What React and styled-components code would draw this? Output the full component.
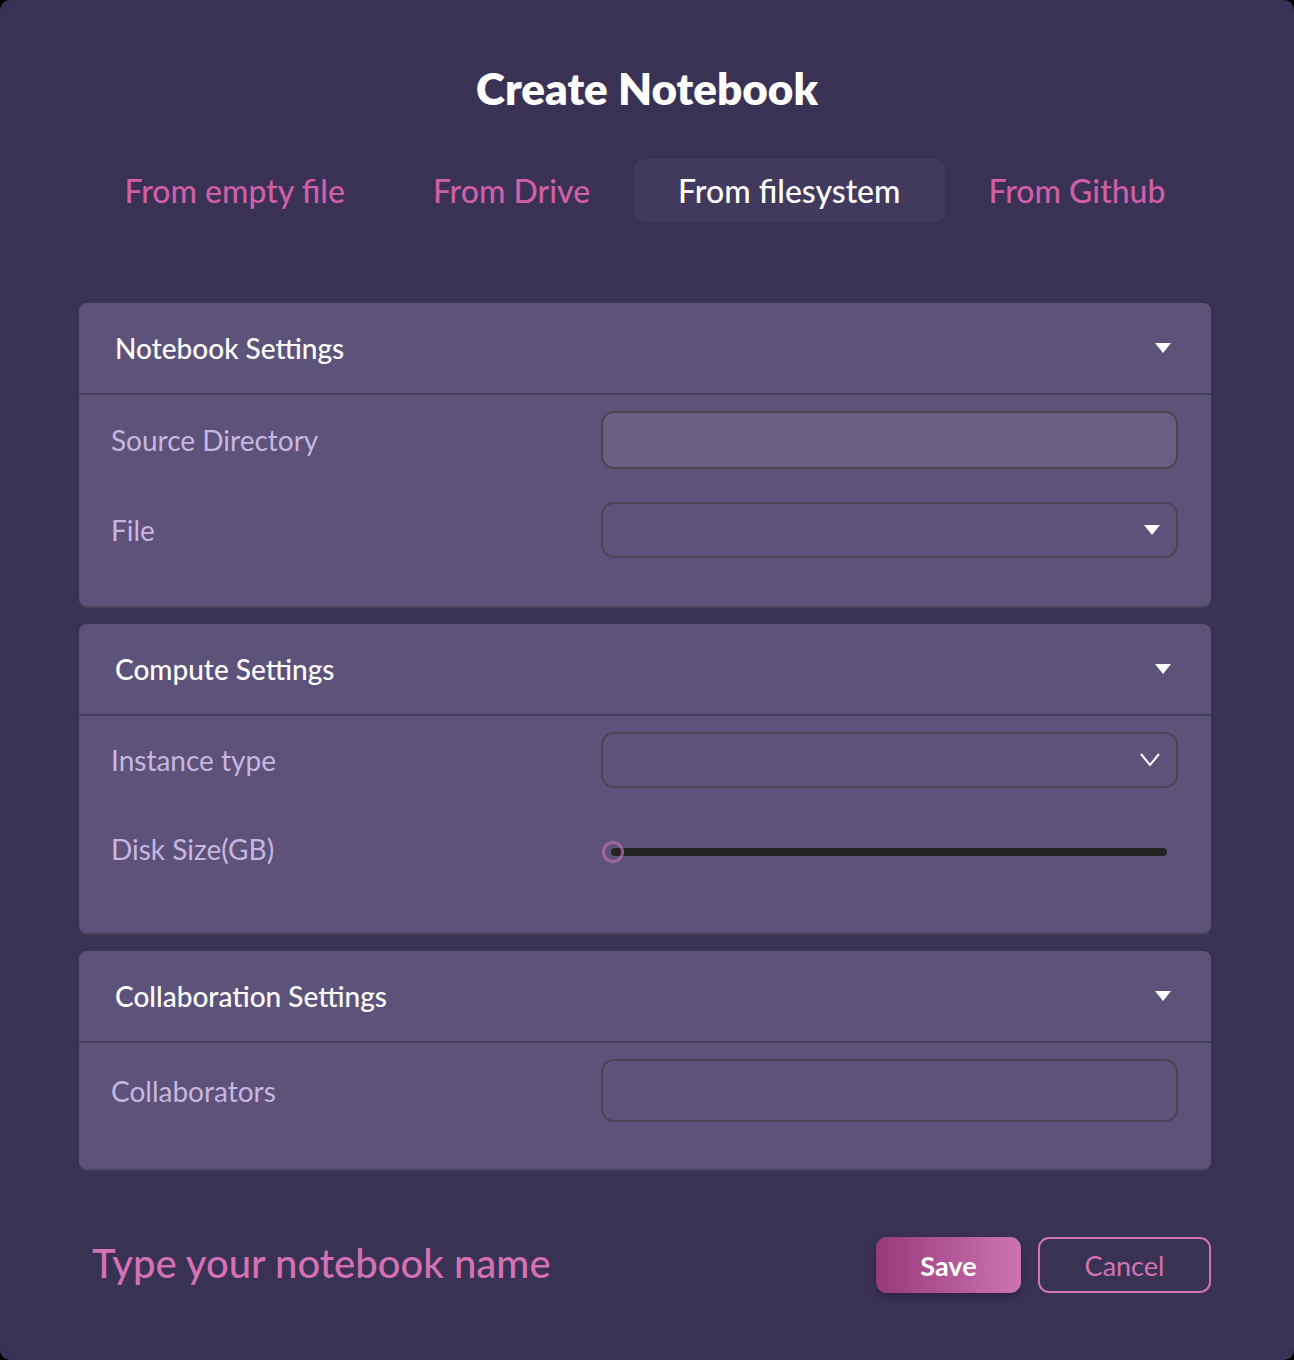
import styled, { createGlobalStyle } from "styled-components";

const GlobalStyle = createGlobalStyle`
  html, body {
    margin: 0;
    padding: 0;
    background: #000;
  }
  * {
    box-sizing: border-box;
  }
`;

const Page = styled.div`
  width: 1294px;
  height: 1360px;
  background-color: #3a3254;
  border-radius: 10px;
  font-family: Lato, "Noto Sans", sans-serif;
  padding: 62px 83px 0 79px;
  display: flex;
  flex-direction: column;
`;

const Title = styled.h1`
  margin: 0;
  text-align: center;
  color: #fff;
  font-size: 44px;
  font-weight: 800;
  line-height: 52px;
  padding-left: 4px;
`;

const Tabs = styled.div`
  display: flex;
  justify-content: center;
  margin-top: 45px;
  margin-bottom: 81px;
`;

const Tab = styled.button`
  border: none;
  background: ${(p) => (p.$active ? "#423a5c" : "transparent")};
  color: ${(p) => (p.$active ? "#ffffff" : "#cf5fa8")};
  font-family: inherit;
  font-size: 32px;
  font-weight: 500;
  height: 63px;
  padding: 0 44px;
  border-radius: 10px;
  cursor: pointer;
`;

const Panel = styled.section`
  background-color: #5d5279;
  border-radius: 8px;
  box-shadow: 0 2px 0 #48425a;
  margin-bottom: 18px;
  padding-bottom: ${(p) => p.$pb}px;
`;

const PanelHeader = styled.div`
  height: 92px;
  display: flex;
  align-items: center;
  justify-content: space-between;
  padding: 0 40px 0 36px;
  border-bottom: 2px solid #45405a;
  color: #fff;
  font-size: 28px;
  font-weight: 500;
`;

const PanelBody = styled.div`
  display: grid;
  grid-template-columns: 490px 1fr;
  row-gap: 33px;
  align-items: center;
  padding: 16px 33px 0 32px;
`;

const Label = styled.label`
  color: #c8b6e2;
  font-size: 28px;
  font-weight: 400;
`;

const Input = styled.div`
  height: ${(p) => p.$h || 58}px;
  border: 2px solid #4a4450;
  border-radius: 13px;
  background-color: ${(p) => (p.$light ? "#6a5f84" : "#5d5279")};
  display: flex;
  align-items: center;
  justify-content: flex-end;
  padding-right: 16px;
`;

const SliderWrap = styled.div`
  height: 55px;
  position: relative;
  display: flex;
  align-items: center;
  padding: 0 11px 0 10px;
`;

const Track = styled.div`
  flex: 1;
  height: 8px;
  border-radius: 4px;
  background-color: #232323;
  margin-top: 6px;
`;

const Thumb = styled.div`
  position: absolute;
  left: 1px;
  top: 50%;
  width: 22px;
  height: 22px;
  margin-top: -8px;
  border-radius: 50%;
  border: 3px solid rgba(186, 110, 170, 0.75);
`;

const Footer = styled.div`
  display: flex;
  align-items: center;
  margin-top: 50px;
  padding-left: 13px;
  gap: 17px;
`;

const NameInput = styled.input`
  flex: 1;
  background: transparent;
  border: none;
  outline: none;
  font-family: inherit;
  font-size: 40px;
  font-weight: 500;
  color: #d371b2;
  padding: 0;
  margin-top: -4px;
  &::placeholder {
    color: #d371b2;
  }
`;

const Button = styled.button`
  height: 56px;
  width: ${(p) => p.$w}px;
  border-radius: 11px;
  font-family: inherit;
  font-size: 27px;
  cursor: pointer;
  ${(p) =>
    p.$primary
      ? `
    border: none;
    background: linear-gradient(90deg, #98397a, #cc74b0);
    color: #fff;
    font-weight: 700;
    box-shadow: 0 3px 6px rgba(20, 10, 30, 0.35);
  `
      : `
    border: 2px solid #d074b2;
    background: transparent;
    color: #d074b2;
    font-weight: 400;
  `}
`;

const Caret = () => (
  <svg width="16" height="10" viewBox="0 0 16 10">
    <path d="M0 0 H16 L8 10 Z" fill="#fff" />
  </svg>
);

const Chevron = () => (
  <svg width="20" height="14" viewBox="0 0 20 14">
    <path d="M1 1 L10 12 L19 1" fill="none" stroke="#fff" strokeWidth="2" />
  </svg>
);

function Section({ title, pb, children }) {
  return (
    <Panel $pb={pb}>
      <PanelHeader>
        <span>{title}</span>
        <Caret />
      </PanelHeader>
      <PanelBody>{children}</PanelBody>
    </Panel>
  );
}

export default function App() {
  const tabs = ["From empty file", "From Drive", "From filesystem", "From Github"];
  return (
    <>
      <GlobalStyle />
      <Page>
        <Title>Create Notebook</Title>
        <Tabs>
          {tabs.map((t) => (
            <Tab key={t} $active={t === "From filesystem"}>
              {t}
            </Tab>
          ))}
        </Tabs>

        <Section title="Notebook Settings" pb={48}>
          <Label>Source Directory</Label>
          <Input $light />
          <Label>File</Label>
          <Input $h={56}>
            <Caret />
          </Input>
        </Section>

        <Section title="Compute Settings" pb={57}>
          <Label>Instance type</Label>
          <Input $h={56}>
            <Chevron />
          </Input>
          <Label>Disk Size(GB)</Label>
          <SliderWrap>
            <Track />
            <Thumb />
          </SliderWrap>
        </Section>

        <Section title="Collaboration Settings" pb={47}>
          <Label>Collaborators</Label>
          <Input $h={63} />
        </Section>

        <Footer>
          <NameInput placeholder="Type your notebook name" />
          <Button $primary $w={145}>
            Save
          </Button>
          <Button $w={173}>Cancel</Button>
        </Footer>
      </Page>
    </>
  );
}
